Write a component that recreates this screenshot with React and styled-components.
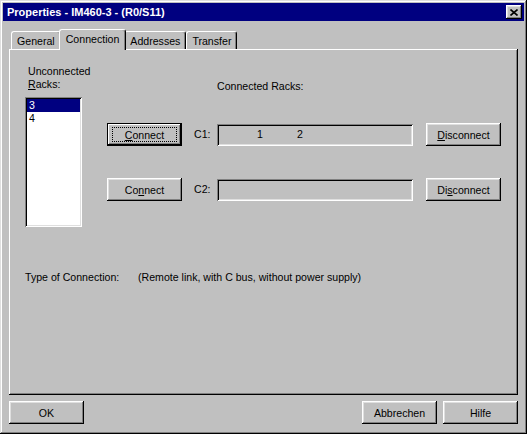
import React from 'react';
import styled, { createGlobalStyle, css } from 'styled-components';

const GlobalStyle = createGlobalStyle`
  html, body {
    margin: 0;
    padding: 0;
    background: #c0c0c0;
  }
  body {
    font-family: "Liberation Sans", Arial, sans-serif;
    font-size: 10.6px;
    color: #000;
  }
`;

const raised = css`
  box-shadow: inset -1px -1px #000, inset 1px 1px #fff,
    inset -2px -2px #808080, inset 2px 2px #dfdfdf;
`;

const sunken = css`
  box-shadow: inset 1px 1px #808080, inset -1px -1px #fff,
    inset 2px 2px #000, inset -2px -2px #dfdfdf;
`;

const Window = styled.div`
  width: 527px;
  height: 434px;
  box-sizing: border-box;
  padding: 3px;
  background: #c0c0c0;
  display: flex;
  flex-direction: column;
  box-shadow: inset -1px -1px #000, inset 1px 1px #dfdfdf,
    inset -2px -2px #808080, inset 2px 2px #fff;
`;

const TitleBar = styled.div`
  height: 18px;
  flex-shrink: 0;
  background: #000080;
  color: #fff;
  font-weight: bold;
  font-size: 11px;
  display: flex;
  align-items: center;
  justify-content: space-between;
  padding: 0 2px 0 4px;
`;

const CloseButton = styled.div`
  width: 16px;
  height: 14px;
  background: #c0c0c0;
  display: flex;
  align-items: center;
  justify-content: center;
  ${raised}
`;

const Body = styled.div`
  flex: 1;
  display: flex;
  flex-direction: column;
  padding: 8px 6px 7px;
`;

const TabStrip = styled.div`
  height: 20px;
  display: flex;
  align-items: flex-end;
  padding-left: 2px;
  position: relative;
  z-index: 1;
`;

const Tab = styled.div`
  box-sizing: border-box;
  height: ${({ $active }) => ($active ? '21px' : '18px')};
  margin: ${({ $active }) => ($active ? '0 -2px -1px' : '0')};
  padding: ${({ $active }) => ($active ? '0 6px 2px' : '0 5px')};
  display: flex;
  align-items: center;
  background: #c0c0c0;
  border-top: 1px solid #fff;
  border-left: 1px solid #fff;
  border-right: 1px solid #000;
  border-radius: 3px 3px 0 0;
  box-shadow: inset -1px 0 #808080;
  position: relative;
  z-index: ${({ $active }) => ($active ? 2 : 1)};
`;

const Panel = styled.div`
  flex: 1;
  box-sizing: border-box;
  padding: 16px 16px;
  box-shadow: inset -1px -1px #000, inset 1px 1px #fff,
    inset -2px -2px #808080;
`;

const MainRow = styled.div`
  display: flex;
  gap: 25px;
`;

const LeftCol = styled.div`
  width: 57px;
  display: flex;
  flex-direction: column;
`;

const Label = styled.div`
  line-height: 13px;
  padding-left: 3px;
  white-space: nowrap;
`;

const ListBox = styled.div`
  margin-top: 6px;
  height: 130px;
  background: #fff;
  box-sizing: border-box;
  padding: 2px;
  ${sunken}
`;

const ListItem = styled.div`
  height: 13px;
  line-height: 13px;
  padding-left: 2px;
  background: ${({ $selected }) => ($selected ? '#000080' : 'transparent')};
  color: ${({ $selected }) => ($selected ? '#fff' : '#000')};
`;

const RightArea = styled.div`
  display: flex;
  flex-direction: column;
  padding-top: 15px;
`;

const Header = styled.div`
  line-height: 13px;
  margin-left: 110px;
`;

const Rows = styled.div`
  margin-top: 30px;
  display: flex;
  flex-direction: column;
  gap: 32px;
`;

const Row = styled.div`
  display: grid;
  grid-template-columns: 87px 23px 209px 75px;
  align-items: center;
`;

const Button = styled.button`
  position: relative;
  width: 75px;
  height: 23px;
  padding: 0;
  border: none;
  background: #c0c0c0;
  font: inherit;
  color: #000;
  ${({ $default }) =>
    $default
      ? css`
          box-shadow: inset 0 0 0 1px #000, inset -2px -2px #000,
            inset 2px 2px #fff, inset -3px -3px #808080;
          &::after {
            content: '';
            position: absolute;
            inset: 4px 5px;
            border: 1px dotted #000;
          }
        `
      : raised}
`;

const RowLabel = styled.span`
  padding-bottom: 1px;
`;

const Field = styled.div`
  width: 196px;
  height: 22px;
  box-sizing: border-box;
  padding: 4px 0 0 40px;
  display: flex;
  line-height: 13px;
  ${sunken}
`;

const Slot = styled.span`
  width: 40px;
`;

const TypeRow = styled.div`
  margin-top: 44px;
  display: grid;
  grid-template-columns: 113px auto;
  line-height: 13px;
`;

const Footer = styled.div`
  margin-top: 6px;
  display: flex;
  justify-content: space-between;
`;

const ButtonGroup = styled.div`
  display: flex;
  gap: 6px;
`;

const CloseIcon = () => (
  <svg width="8" height="7" viewBox="0 0 8 7">
    <path d="M0.5 0.5 L7.5 6.5 M7.5 0.5 L0.5 6.5" stroke="#000" strokeWidth="1.6" />
  </svg>
);

export default function App() {
  return (
    <>
      <GlobalStyle />
      <Window>
        <TitleBar>
          <span>Properties - IM460-3 - (R0/S11)</span>
          <CloseButton>
            <CloseIcon />
          </CloseButton>
        </TitleBar>
        <Body>
          <TabStrip>
            <Tab>General</Tab>
            <Tab $active>Connection</Tab>
            <Tab>Addresses</Tab>
            <Tab>Transfer</Tab>
          </TabStrip>
          <Panel>
            <MainRow>
              <LeftCol>
                <Label>Unconnected</Label>
                <Label>
                  <u>R</u>acks:
                </Label>
                <ListBox>
                  <ListItem $selected>3</ListItem>
                  <ListItem>4</ListItem>
                </ListBox>
              </LeftCol>
              <RightArea>
                <Header>Connected Racks:</Header>
                <Rows>
                  <Row>
                    <Button $default>
                      <u>C</u>onnect
                    </Button>
                    <RowLabel>C1:</RowLabel>
                    <Field>
                      <Slot>1</Slot>
                      <Slot>2</Slot>
                    </Field>
                    <Button>
                      <u>D</u>isconnect
                    </Button>
                  </Row>
                  <Row>
                    <Button>
                      Co<u>n</u>nect
                    </Button>
                    <RowLabel>C2:</RowLabel>
                    <Field />
                    <Button>
                      Di<u>s</u>connect
                    </Button>
                  </Row>
                </Rows>
              </RightArea>
            </MainRow>
            <TypeRow>
              <span>Type of Connection:</span>
              <span>(Remote link, with C bus, without power supply)</span>
            </TypeRow>
          </Panel>
          <Footer>
            <Button>OK</Button>
            <ButtonGroup>
              <Button>Abbrechen</Button>
              <Button>Hilfe</Button>
            </ButtonGroup>
          </Footer>
        </Body>
      </Window>
    </>
  );
}
